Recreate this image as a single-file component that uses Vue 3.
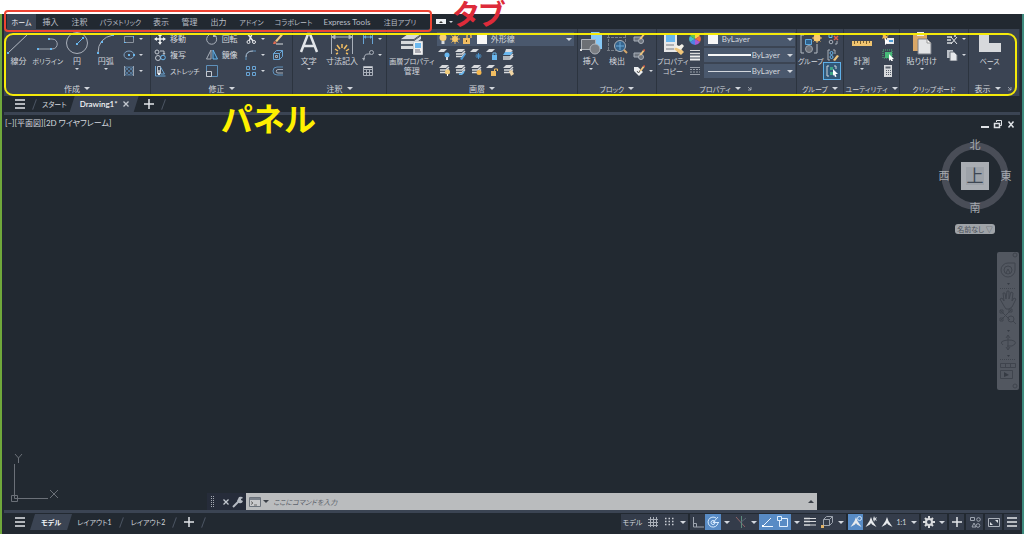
<script setup>
import { ref } from 'vue'

const tabs = [
  ['ホーム', 29], ['挿入', 29], ['注釈', 29], ['パラメトリック', 53], ['表示', 28], ['管理', 29],
  ['出力', 29], ['アドイン', 37], ['コラボレート', 47], ['Express Tools', 60], ['注目アプリ', 46]
]

const sheets = (c = '#d8dadd') =>
  `<path d="M4 1h7L8 4H1z" fill="${c}"/><path d="M2 6h6l3-3M2 8.500h6l3-3" stroke="${c}" stroke-width="1.500" fill="none"/>`
const block = '<path d="M1 4h7v4H1z" fill="#6d747e" stroke="#a9b0ba"/><circle cx="8" cy="8" r="2.500" fill="#6d747e" stroke="#a9b0ba"/>'
const pencil = '<path d="M7 5l3-4 1.500 1-3 4-2 .5z" fill="#efc57d"/><path d="M10 1l1-1 1.500 1-1 1.500z" fill="#d95a45"/>'
const person = '<path d="M6 1l1.500 4 4 6L7 8.500 6 7 5 8.500.500 11l4-6z" fill="#e8eaed"/>'

const icons = {
  line: '<path d="M2 21L22 2" stroke="#b4bac3"/><path d="M1 20h2v2H1zM21 1h2v2h-2z" fill="#69b7ee"/>',
  poly: '<path d="M2 17h14c7 0 7-10 0-10h-3" fill="none" stroke="#9fa6b1"/><path d="M1 16h2v2H1zM14 16h2v2h-2zM12 6h2v2h-2z" fill="#69b7ee"/>',
  circle: '<circle cx="12" cy="11" r="10.500" fill="none" stroke="#aab0ba"/><path d="M12 12l6-6" stroke="#69b7ee"/><path d="M11 11h2v2h-2zM17 5h2v2h-2z" fill="#69b7ee"/>',
  arc: '<path d="M4 21Q4 6 19 3" fill="none" stroke="#aab0ba"/><path d="M3 20h2v2H3zM7 9h2v2H7zM18 2h2v2h-2z" fill="#69b7ee"/>',
  rect: '<path d="M1.500 3.500h9v6h-9z" fill="none" stroke="#8b929d"/><path d="M1 9h2v1H1zM10 3h1v2h-1z" fill="#69b7ee"/>',
  ellipse: '<ellipse cx="6" cy="6" rx="5" ry="4" fill="none" stroke="#7fa3c4"/><path d="M5 5h2v2H5zM10 5h2v2h-2z" fill="#69b7ee"/>',
  hatch: '<path d="M2 2h8v8H2zM2 6l4-4M2 10l8-8M6 10l4-4M2 6l4 4M2 2l8 8M6 2l4 4" fill="none" stroke="#5f8cb4" stroke-width=".7"/><path d="M1 1h1v10H1zM10 1h1v10h-1z" fill="#9aa2ad"/>',
  move: '<path d="M6 1v10M1 6h10" stroke="#f0f2f4" stroke-width="1.500"/><path d="M6 0l2 3H4zM6 12l2-3H4zM0 6l3-2v4zM12 6L9 4v4z" fill="#f0f2f4"/>',
  copy: '<circle cx="3" cy="3" r="2" fill="none" stroke="#bfc5cd"/><circle cx="4" cy="9" r="2.500" fill="none" stroke="#bfc5cd"/><circle cx="9" cy="8.500" r="2.300" fill="none" stroke="#69b7ee"/><path d="M6 2h4v3M9 4l1 1.500L11 4" fill="none" stroke="#bfc5cd"/>',
  stretch: '<path d="M1.500 1v10h10" fill="none" stroke="#69a5d5"/><path d="M3.500 1.500h3v7h-3z" fill="none" stroke="#bfc5cd"/><path d="M6.500 2l4 7h-4" fill="none" stroke="#69a5d5"/><path d="M5 5v5M4 8l1 2 1-2" stroke="#fff" fill="none"/>',
  rotate: '<path d="M9 2.500A5 5 0 1 1 3 2" fill="none" stroke="#a9b0ba"/><path d="M7 0v4h4z" fill="#a9b0ba"/>',
  mirror: '<path d="M5 1v9H.500z" fill="none" stroke="#aab0ba"/><path d="M7 1v9h4.500z" fill="#2c4f6d" stroke="#69b7ee"/>',
  scale: '<path d="M.500.500h11v11H.500z" fill="none" stroke="#5e90ba"/><path d="M.500 6.500h5v5h-5z" fill="none" stroke="#c4c9d0"/>',
  trim: '<path d="M2 0l6 8M7 1L4 8" stroke="#e6e8eb" stroke-width="1.500"/><circle cx="3.500" cy="9" r="1.500" fill="none" stroke="#e6e8eb"/><circle cx="9" cy="9" r="1.500" fill="none" stroke="#e6e8eb"/>',
  fillet: '<path d="M1 11V8Q1 2 8 2h3" fill="none" stroke="#5e90ba"/><path d="M1 8Q1 2 8 2" fill="none" stroke="#a9b0ba"/>',
  array: '<path d="M1.500 1.500h3v3h-3zM7.500 1.500h3v3h-3zM1.500 7.500h3v3h-3zM7.500 7.500h3v3h-3z" fill="none" stroke="#69a5d5"/>',
  erase: '<path d="M3 8l6-7 2 1-6 7z" fill="#f1c987"/><path d="M2 8l3 2-2 1H1z" fill="#e36a50"/><path d="M4 11h7" stroke="#dadde1"/>',
  cube: '<path d="M1.500 4.500h6v6h-6zM1.500 4.500l3-3h6v6l-3 3M7.500 4.500l3-3" fill="none" stroke="#69a5d5"/><path d="M3.500 6.500h2v2h-2z" fill="none" stroke="#a9b0ba"/>',
  offset: '<path d="M11 2H5a4 4 0 0 0 0 8h6" fill="none" stroke="#5e90ba"/><path d="M11 4.500H6a1.500 1.500 0 0 0 0 3.500h5" fill="none" stroke="#a9b0ba"/>',
  text: '<path d="M4 20L11 2h2l7 18M7 14h10" fill="none" stroke="#e2e5e9" stroke-width="2.500"/>',
  dim: '<path d="M1.500 1v21M22.500 1v21M2 5h20M2 5l3-2v4zM22 5l-3-2v4z" fill="#c4c9d0" stroke="#a9b0ba"/><path d="M12 12v4M7 13l3 4M17 13l-3 4M5 17l3 2M19 17l-3 2M6 22l2-1M18 22l-2-1" stroke="#f1bd62" stroke-width="1.500"/>',
  dimSmall: '<path d="M1.500 1v10M10.500 1v10M2 4h8" stroke="#69a5d5"/><path d="M2 4l2-2v4zM10 4L8 2v4z" fill="#69a5d5"/>',
  leader: '<path d="M2 10q0-5 4-5h2" fill="none" stroke="#aab0ba"/><circle cx="9.500" cy="3.500" r="2" fill="none" stroke="#aab0ba"/><path d="M0 9l2 3 1-3z" fill="#aab0ba"/>',
  table: '<path d="M1.500 1.500h9v9h-9zM1 4.500h10M1 7.500h10M4.500 4v7M7.500 4v7" fill="none" stroke="#aab0ba"/><path d="M2 2h8v1H2z" fill="#d5d8dc"/>',
  layers: '<path d="M8 2h13l-7 5H1zM1 9h13l7-5v3l-7 5H1zM1 14h13l7-5v3l-7 5H1z" fill="#d8dadd"/><path d="M1 8h13l7-5M1 13h13l7-5" stroke="#6d747f" fill="none"/><path d="M13.500 9.500h9v13h-9z" fill="#f0f0f0" stroke="#cfd2d6"/><path d="M15 11h6v5h-6z" fill="#6bb8f0"/><path d="M15 18h5M15 20h6" stroke="#667"/>',
  bulb: '<circle cx="6" cy="4.500" r="3.500" fill="#f5cf7b"/><path d="M4.500 8h3v3h-3z" fill="#d8dadd"/>',
  sun: '<path d="M6 1v10M1 6h10M2.500 2.500l7 7M9.500 2.500l-7 7" stroke="#e4b35a"/><circle cx="6" cy="6" r="3" fill="#f6c868"/>',
  lock: '<path d="M6 6V3a2 2 0 0 1 4 0v2" fill="none" stroke="#e8b55f" stroke-width="1.500"/><path d="M2 5h7v6H2z" fill="#f1bd62"/><path d="M5 7h1v2H5z" fill="#714e1c"/>',
  lyBulbBlue: '<path d="M3 1h6L6 4H0z" fill="#d8dadd"/><circle cx="9" cy="7" r="2.500" fill="#69b7ee"/><path d="M8 9h2v3H8z" fill="#d8dadd"/>',
  lyMatch: sheets() + '<path d="M6 11l5-6 1 1-4 6z" fill="#4f9cd8"/>',
  lyFreeze: '<path d="M3 1h6L6 4H0z" fill="#d8dadd"/><path d="M8.500 5v6M5.500 8h6M6.500 6l4 4M10.500 6l-4 4" stroke="#4a93cc"/>',
  lyLock: '<path d="M3 1h6L6 4H0z" fill="#d8dadd"/><path d="M6 7h5v5H6z" fill="#69b7ee"/><path d="M7 7V5h3v2" fill="none" stroke="#69b7ee"/>',
  lyWalk: '<path d="M4 1h5l2 2-2 1H3z" fill="#d8dadd"/><path d="M3 4h8L9 7H1z" fill="#69b7ee"/><path d="M1 9h7l3-3M1 11h7l3-3" fill="none" stroke="#d8dadd" stroke-width="1.500"/>',
  lyBulb: sheets() + '<circle cx="9.500" cy="8" r="2.500" fill="#f5cf7b"/><path d="M9 10h1v2H9z" fill="#fff"/>',
  lyUndo: sheets() + '<path d="M5 10q4 1 5-3" fill="none" stroke="#69b7ee" stroke-width="1.500"/>',
  lySun: sheets() + '<circle cx="9" cy="8.500" r="2.500" fill="#f6b84d"/>',
  lyUnlock: '<path d="M3 1h6L6 4H0z" fill="#d8dadd"/><path d="M5 7h5v5H5z" fill="#f1bd62"/><path d="M8.500 7V5h3v2" fill="none" stroke="#f1bd62"/>',
  lyTag: sheets() + '<path d="M7 7l3-1 2 4-3 2z" fill="#f2d6a4"/>',
  insert: '<path d="M12 0h8l3 3v14h-11z" fill="#86c8f6"/><path d="M2.500 7.500h14v10h-14z" fill="#6d7075" stroke="#b0b4ba"/><circle cx="16" cy="17" r="5" fill="#7a7d82" stroke="#b0b4ba"/><path d="M1 17h2v2H1z" fill="#ddd"/>',
  detect: '<path d="M3.500 3v16M20.500 3v8M2 18.500h11M2 5.500h20" stroke="#777e88" stroke-dasharray="3 1"/><circle cx="15" cy="14" r="5.500" fill="#35658e" stroke="#b0b4ba"/><path d="M11 14h8M15 10v8" stroke="#6da9d6"/><path d="M19 18l3 3" stroke="#d6a869" stroke-width="2"/>',
  blkEdit: block + pencil,
  blkNew: block + pencil,
  tag: '<path d="M1 2h4l5 5-4 4-5-5z" fill="#eceef0"/><path d="M4 6l1.500 2L8 4" stroke="#555" fill="none"/>' + pencil,
  match: '<path d="M3 1h13v19H3z" fill="#e8e8e8"/><path d="M5 3h9v7H5z" fill="#69b7ee"/><path d="M5 13h8M5 17h8" stroke="#767b82"/><path d="M13 17l4-3 6 6-3 3z" fill="#f0c67a"/><path d="M14 15l2-2 2 1 3-2 2 2-3 4z" fill="#f4f1e8"/>',
  wheel: '<path d="M6 6V0A6 6 0 0 1 11 3z" fill="#ffd043"/><path d="M6 6l5-3a6 6 0 0 1 0 6z" fill="#f1703f"/><path d="M6 6l5 3a6 6 0 0 1-5 3z" fill="#ab5ad0"/><path d="M6 6v6a6 6 0 0 1-5-3z" fill="#4f82e4"/><path d="M6 6L1 9a6 6 0 0 1 0-6z" fill="#45bfd0"/><path d="M6 6L1 3a6 6 0 0 1 5-3z" fill="#62c44f"/>',
  weights: '<path d="M1 1.500h10" stroke="#ddd"/><path d="M1 4.500h10" stroke="#ddd" stroke-width="1.500"/><path d="M1 7.500h10M1 10.500h10" stroke="#eee" stroke-width="2"/>',
  types: '<path d="M1 2.500h10M1 9.500h10" stroke="#989fa9"/><path d="M1 4.500h10M1 7h10" stroke="#989fa9" stroke-dasharray="2 1"/>',
  group: '<path d="M5 3H2v18h3M15 21h3V12" fill="none" stroke="#b4bac3"/><path d="M6.500 7.500h6v5h-6z" fill="#2f618b" stroke="#5eaae0"/><circle cx="10" cy="17" r="3.500" fill="#6d7178" stroke="#9ba1aa"/><path d="M18 1v10M13 6h10M14.500 2.500l7 7M21.500 2.500l-7 7" stroke="#e8b55f"/><circle cx="18" cy="6" r="3.500" fill="#f8cb72"/>',
  ungroup: '<path d="M2 1.500h3v3H2z" fill="none" stroke="#69b7ee"/><circle cx="4" cy="9" r="1.800" fill="none" stroke="#aab0ba"/><path d="M7 3l4 4M11 3L7 7" stroke="#e25d4b" stroke-width="1.500"/><path d="M8 11h2V8" stroke="#aab0ba" fill="none"/>',
  groupEdit: '<path d="M3 1H1v10h2M6 1h2v4" fill="none" stroke="#aab0ba"/><circle cx="4.500" cy="4" r="1.500" fill="none" stroke="#69b7ee"/><circle cx="4.500" cy="8" r="1.500" fill="none" stroke="#69b7ee"/><path d="M6 11l4-5 2 1-4 5z" fill="#efc57d"/>',
  groupSel: '<path d="M3 1H1v10h2M8 1h2v3" fill="none" stroke="#cfd4da"/><path d="M4 2h3v3H4zM4 7h3v3H4z" fill="#3ea487"/><path d="M7 4l5 5H9.500l1 2.500-1.500.5-1-2.500L7 11z" fill="#fff"/>',
  ruler: '<path d="M2 9h20v5H2z" fill="#f0c46f"/><path d="M4.500 9v3M7.500 9v2M10.500 9v3M13.500 9v2M16.500 9v3M19.500 9v2" stroke="#7b6130"/>',
  quick: '<path d="M3 0l1 3 3-1-2 2 2 2-3-1-1 3-1-3-2 1 1-3-1-2 2 1z" fill="#f3bd5a"/><path d="M5 5h7v6H5z" fill="#e7e9eb"/><path d="M7 7h4v2H7z" fill="#4d9ad3"/><path d="M3 5l5 5-3 .5L3 12z" fill="#fff"/>',
  select: '<path d="M1 1h9v8H1z" fill="none" stroke="#51ba7b" stroke-dasharray="1 1"/><path d="M3 3h7v6H3z" fill="#47ba79"/><path d="M7 5l5 5-2 .2 1 1.800-1.500.5-1-2L7 12z" fill="#fff"/>',
  calc: '<path d="M2 0h8v12H2z" fill="#d8dadd"/><path d="M3.500 1.500h5v2h-5z" fill="#59616c"/><path d="M4.500 5v6M6.500 5v6M8.500 5v6" stroke="#59616c" stroke-dasharray="1 1"/>',
  paste: '<path d="M3 2h14v17H3z" fill="#d9a767"/><path d="M7 0h7v4H7z" fill="#ececec"/><path d="M8 7h9l4 4v11H8z" fill="#e3e4e6" stroke="#7a7f87"/><path d="M17 7v4h4z" fill="#fff" stroke="#999"/>',
  cut: '<path d="M1 1h8v3M1 4h5M1 7h4M1 10h5" stroke="#d8dadd" stroke-width="1.500" fill="none"/><path d="M5 4l6 7M11 4l-6 7" stroke="#e6e8eb"/>',
  pages: '<path d="M1 1h6v8H1z" fill="#bcc1c8"/><path d="M4 3h4l3 3v6H4z" fill="#e6e8eb" stroke="#6c737d"/>',
  base: '<path d="M1 2h10v9h12v9H1z" fill="#d7d9dc"/>',
  grid: '<path d="M3.500 1v10M6.500 1v10M9.500 1v10M1 3.500h10M1 6.500h10M1 9.500h10" stroke="#aab0b9"/>',
  dots: '<path d="M2 2.500h10M2 5.500h10M2 8.500h10" stroke="#c8ccd3" stroke-width="1.500" stroke-dasharray="1.500 2"/>',
  ortho: '<path d="M1.500 1v10H12M1.500 7.500h3V11" fill="none" stroke="#9da4af"/>',
  polar: '<path d="M9 2A5 5 0 1 0 11 7M6 6.500h6M6 6.500L11 1" fill="none" stroke="#d7ebff"/><circle cx="6" cy="6.500" r="2" fill="none" stroke="#d7ebff"/>',
  iso: '<path d="M1 1l9 10" stroke="#8f6468"/><path d="M6.500 0v12" stroke="#5d8b7c"/><path d="M5 7l6-5" stroke="#5b6474"/>',
  track: '<path d="M1 10.500h11M2 10L10 2" stroke="#eff7ff"/><path d="M1 9h2v2H1z" fill="#fff"/>',
  osnap: '<path d="M2.500 2.500h8v8h-8z" fill="none" stroke="#e2f0ff"/><path d="M.500.500h4v4h-4z" fill="#4f8cc9" stroke="#e2f0ff"/>',
  lines: '<path d="M0 2.500h6M0 5.500h6M0 9h6" stroke="#d8dadd" stroke-width="1.500"/><path d="M6 2.500h6M6 5.500h6M6 9h6" stroke="#d8dadd"/>',
  isoCube: '<path d="M2.500 3.500h6v6h-6zM2.500 3.500l3-3h6v6l-3 3M8.500 3.500l3-3" fill="none" stroke="#9da4af"/><path d="M0 9h3v3H0z" fill="#e1b267"/>',
  annoOn: person + '<circle cx="9.500" cy="2.500" r="2" fill="none" stroke="#cfe4fa"/>',
  annoAuto: person + '<path d="M9 0l1 2 2-1-1 2 1 2-2-1-1 2-1-3z" fill="#cfd3d9"/>',
  anno: person,
  gear: '<path d="M6 0v12M0 6h12M2 2l8 8M10 2l-8 8" stroke="#d8dadd" stroke-width="2"/><circle cx="6" cy="6" r="3" fill="#3b4453" stroke="#d8dadd" stroke-width="2"/>',
  plus: '<path d="M6 1v10M1 6h10" stroke="#e2e5e9" stroke-width="1.500"/>',
  isolate: '<path d="M1.500 1.500h4v3h-4z" fill="none" stroke="#9da4af"/><circle cx="9.500" cy="3.500" r="1.800" fill="none" stroke="#9da4af"/><path d="M3 11l2-4 2 4z" fill="none" stroke="#9da4af"/><circle cx="9" cy="9.500" r="1.800" fill="none" stroke="#9da4af"/>',
  full: '<path d="M.500 2.500h11v8H.500z" fill="none" stroke="#aab0b9"/><path d="M7 4h3v3zM2 9h3L2 6z" fill="#dde0e4"/>',
  menu: '<path d="M1 2h10M1 6h10M1 10h10" stroke="#e2e5e9" stroke-width="1.500"/>',
  close: '<path d="M3.500 3.500l5 5M8.500 3.500l-5 5" stroke="#c3c8d0" stroke-width="1.300"/>',
  wrench: '<path d="M1 11l6-6" stroke="#b6bbc3" stroke-width="2"/><path d="M7 1q3-1 4 1L9 3v1l2 1q-1 3-4 2L5 5z" fill="#b6bbc3"/>',
  grip: '<path d="M4.500 0v12M6.500 0v12" stroke="#a3a8b1" stroke-dasharray="1 1"/>',
  prompt: '<path d="M.500 1.500h11v9H.500z" fill="#c8c9cb" stroke="#6c737c"/><path d="M1 2h10v2H1z" fill="#7b828b"/><path d="M2 5.500l2 1.500-2 1.500M5 9h3" fill="none" stroke="#666"/>',
  min: '<path d="M2 9h8" stroke="#dfe2e6" stroke-width="2"/>',
  restore: '<path d="M4.500 4V2.500h5v5H8" fill="none" stroke="#dfe2e6"/><path d="M2.500 5.500h5v4h-5z" fill="none" stroke="#dfe2e6" stroke-width="1.500"/>',
  closeBold: '<path d="M3.500 3.500l5 6M8.500 3.500l-5 6" stroke="#dfe2e6" stroke-width="1.500"/>',
  corner: '<path d="M4 4l4 4M8 4v4H4" fill="none" stroke="#b6bbc3"/>'
}

const big = (w, icon, lines, arrow = false) => ({ w, big: true, icon, lines, arrow })
const small = (w, ...items) => ({ w, items: items.map(([icon, label, arrow, on]) => ({ icon, label, arrow, on })) })

const panels = [
  { name: '作成', w: 147, arrow: true, cols: [big(29, 'line', ['線分']), big(30, 'poly', ['ポリライン']), big(29, 'circle', ['円'], true), big(29, 'arc', ['円弧'], true),
    small(30, ['rect', '', true], ['ellipse', '', true], ['hatch', '', true])] },
  { name: '修正', w: 142, arrow: true, cols: [small(52, ['move', '移動'], ['copy', '複写'], ['stretch', 'ストレッチ']), small(40, ['rotate', '回転'], ['mirror', '鏡像'], ['scale', '']),
    small(27, ['trim', '', true], ['fillet', '', true], ['array', '', true]), small(23, ['erase'], ['cube'], ['offset'])] },
  { name: '注釈', w: 94, arrow: true, cols: [big(32, 'text', ['文字'], true), big(35, 'dim', ['寸法記入']), small(27, ['dimSmall', '', true], ['leader', '', true], ['table'])] },
  { name: '画層', w: 191, arrow: true, cols: [big(50, 'layers', ['画層プロパティ', '管理']), { w: 141, layer: true }] },
  { name: 'ブロック', w: 79, arrow: true, cols: [big(26, 'insert', ['挿入'], true), big(27, 'detect', ['検出']), small(26, ['blkEdit'], ['blkNew'], ['tag', '', true])] },
  { name: 'プロパティ', w: 140, arrow: true, corner: true, cols: [big(32, 'match', ['プロパティ', 'コピー']), { w: 108, props: true }] },
  { name: 'グループ', w: 47, arrow: true, cols: [big(28, 'group', ['グループ']), small(19, ['ungroup'], ['groupEdit'], ['groupSel', '', false, true])] },
  { name: 'ユーティリティ', w: 56, arrow: true, cols: [big(36, 'ruler', ['計測'], true), small(20, ['quick'], ['select'], ['calc'])] },
  { name: 'クリップボード', w: 69, cols: [big(44, 'paste', ['貼り付け'], true), small(25, ['cut', '', true], ['pages', '', true])] },
  { name: '表示', w: 51, arrow: true, corner: true, cols: [big(42, 'base', ['ベース'], true), small(9)] }
]
const fr = list => ({ gridTemplateColumns: list.map(i => `minmax(0, ${i.w}fr)`).join(' ') })
const isKana = text => /[ァ-ヶー]{3}/.test(text)

const layerRows = [
  ['lyBulbBlue', 'lyMatch', 'lyFreeze', 'lyLock', 'lyWalk'],
  ['lyBulb', 'lyUndo', 'lySun', 'lyUnlock', 'lyTag']
]
const props = [
  { icon: 'wheel', label: '色', swatch: true },
  { icon: 'weights', label: '線の太さ', thick: true },
  { icon: 'types', label: '線種' }
]

const status = [
  [{ text: 'モデル', w: 23 }, { icon: 'grid', w: 17 }, { icon: 'dots', w: 16 }, { w: 11 }],
  [{ icon: 'ortho', w: 15 }, { icon: 'polar', w: 16, on: true }, { w: 12 }, { icon: 'iso', w: 15 }, { w: 11 }, { icon: 'track', w: 15, on: true },
    { icon: 'osnap', w: 17, on: true }, { w: 11 }, { icon: 'lines', w: 16 }, { icon: 'isoCube', w: 17 }, { w: 11 }],
  [{ icon: 'annoOn', w: 15, on: true }, { icon: 'annoAuto', w: 16 }, { icon: 'anno', w: 16 }, { text: '1:1', w: 13 }, { w: 11 }],
  [{ icon: 'gear', w: 15 }, { w: 11 }],
  [{ icon: 'plus', w: 15 }],
  [{ icon: 'isolate', w: 17 }],
  [{ icon: 'full', w: 17 }],
  [{ icon: 'menu', w: 16 }]
]
const command = ref('')
</script>

<template>
  <div class="page">
    <div class="window">
      <nav class="tabs">
        <button v-for="(t, i) in tabs" :key="t[0]" class="tab" :class="{ active: i === 0, kana: isKana(t[0]) }" :style="{ width: t[1] + 'px' }">{{ t[0] }}</button>
        <button class="toggle" aria-label="リボンの表示切替"><i class="chip"><i class="up"></i></i><i class="down"></i></button>
      </nav>

      <div class="ribbon" :style="fr(panels)">
        <section v-for="p in panels" :key="p.name" class="panel">
          <div class="body" :style="fr(p.cols)">
            <template v-for="(c, ci) in p.cols" :key="ci">
              <button v-if="c.big" class="big">
                <svg class="icon-big" viewBox="0 0 24 24" v-html="icons[c.icon]"></svg>
                <span v-for="l in c.lines" :key="l" :class="{ kana: isKana(l) }">{{ l }}</span>
                <i v-if="c.arrow" class="down"></i>
              </button>
              <div v-else-if="c.layer" class="layer">
                <div class="combo">
                  <svg v-for="n in ['bulb', 'sun', 'lock']" :key="n" class="icon" viewBox="0 0 12 12" v-html="icons[n]"></svg>
                  <i class="swatch"></i>
                  <select aria-label="画層"><option>外形線</option></select>
                  <i class="down wide"></i>
                </div>
                <div v-for="(r, ri) in layerRows" :key="ri" class="layer-row">
                  <button v-for="n in r" :key="n" :aria-label="n"><svg class="icon" viewBox="0 0 12 12" v-html="icons[n]"></svg></button>
                </div>
              </div>
              <div v-else-if="c.props" class="props">
                <label v-for="r in props" :key="r.icon" class="prop">
                  <svg class="icon" viewBox="0 0 12 12" v-html="icons[r.icon]"></svg>
                  <span class="combo">
                    <i v-if="r.swatch" class="swatch"></i>
                    <i v-else class="rule" :class="{ thick: r.thick }"></i>
                    <select :aria-label="r.label"><option>ByLayer</option></select>
                    <i class="down wide"></i>
                  </span>
                </label>
              </div>
              <div v-else class="stack">
                <button v-for="it in c.items" :key="it.icon" class="small" :class="{ on: it.on }" :aria-label="it.label || it.icon">
                  <svg class="icon" viewBox="0 0 12 12" v-html="icons[it.icon]"></svg>
                  <span v-if="it.label" :class="{ kana: isKana(it.label) }">{{ it.label }}</span>
                  <i v-if="it.arrow" class="down"></i>
                </button>
              </div>
            </template>
          </div>
          <footer class="title">
            <span :class="{ kana: isKana(p.name) }">{{ p.name }}</span><i v-if="p.arrow" class="down wide"></i>
            <svg v-if="p.corner" class="corner" viewBox="0 0 12 12" v-html="icons.corner"></svg>
          </footer>
        </section>
      </div>

      <div class="files">
        <button class="square" aria-label="メニュー"><svg class="icon" viewBox="0 0 12 12" v-html="icons.menu"></svg></button>
        <i class="slash"></i>
        <button class="file start kana">スタート</button>
        <button class="file current drawing">Drawing1*<svg class="icon" viewBox="0 0 12 12" v-html="icons.close"></svg></button>
        <button class="square" aria-label="新規"><svg class="icon" viewBox="0 0 12 12" v-html="icons.plus"></svg></button>
        <i class="slash"></i>
      </div>

      <main class="canvas">
        <div class="view-head">
          <span>[−][平面図][2D ワイヤフレーム]</span>
          <span class="win">
            <button v-for="n in ['min', 'restore', 'closeBold']" :key="n" :aria-label="n"><svg class="icon" viewBox="0 0 12 12" v-html="icons[n]"></svg></button>
          </span>
        </div>

        <div class="cube">
          <svg class="compass" viewBox="0 0 76 78">
            <circle cx="38" cy="39" r="30" fill="none" stroke="#494d57" stroke-width="7" />
            <path d="M24 25h28v28H24z" fill="#a9adb3" />
            <path d="M29 30h18v18H29z" fill="#9da2a9" />
            <g class="dir"><text x="38" y="12">北</text><text x="7" y="43">西</text><text x="69" y="43">東</text><text x="38" y="75">南</text></g>
            <text class="face" x="38" y="45">上</text>
          </svg>
          <button class="ucs kana">名前なし ▽</button>
        </div>

        <svg class="navbar" viewBox="0 0 22 138">
          <rect width="22" height="138" rx="2" fill="#525760" />
          <g fill="none" stroke="#3f444d">
            <circle cx="18" cy="3" r="2" /><circle cx="18" cy="134" r="2" />
            <path d="M11 11a7 7 0 1 0 7 7v-7z" /><circle cx="11" cy="18" r="4" /><path d="M9 21l2-4 2 4" />
            <path d="M3 36.500h16M3 107.500h16" stroke-dasharray="1 1" />
            <path d="M7 54l-4-7 2-1 2 3-1-8 2 0 1 6 1-8 2 0 0 8 2-7 2 1-1 8 2-3 2 1-4 8-3 2H9z" />
            <path d="M3 58l10 10M14 58L4 68M3 58h3v3H3zM12 57h3v3h-3zM3 66h3v3H3z" /><circle cx="14" cy="67" r="3" /><path d="M16 69l3 3" />
            <path d="M11 83v15M9 86l2-3 2 3M9 95l2 3 2-3M6 93q-5-4 5-5 9 0 7 4-2 3-8 2" />
            <path d="M3.500 111.500h15v4h-15zM8.500 111v5M13.500 111v5M3.500 118.500h12v8h-12z" />
          </g>
          <path d="M10 31h3l-1.500 2zM10 78h3l-1.500 2zM10 103h3l-1.500 2zM7 120l5 3-5 2z" fill="#363b44" />
        </svg>

        <svg class="axes" viewBox="0 0 50 50" fill="none" stroke="#6b7078">
          <path d="M3.500 10v34.500H37M.500 41.500h6v6h-6zM4 0l3.500 4L11 0M7.500 4v5M39 36l8 8M47 36l-8 8" />
        </svg>

        <div class="command">
          <span class="tools">
            <svg class="icon" viewBox="0 0 12 12" v-html="icons.grip"></svg>
            <button aria-label="閉じる"><svg class="icon" viewBox="0 0 12 12" v-html="icons.close"></svg></button>
            <button aria-label="カスタマイズ"><svg class="icon" viewBox="0 0 12 12" v-html="icons.wrench"></svg></button>
          </span>
          <span class="entry">
            <svg class="icon" viewBox="0 0 12 12" v-html="icons.prompt"></svg><i class="down dark"></i>
            <input v-model="command" class="kana" aria-label="コマンド" placeholder="ここにコマンドを入力" />
            <i class="up dark"></i>
          </span>
        </div>
      </main>

      <div class="bottom">
        <button class="square" aria-label="レイアウト一覧"><svg class="icon" viewBox="0 0 12 12" v-html="icons.menu"></svg></button>
        <button class="file current model kana">モデル</button>
        <button class="file kana">レイアウト1</button><i class="slash"></i>
        <button class="file kana">レイアウト2</button><i class="slash"></i>
        <button class="square" aria-label="新規レイアウト"><svg class="icon" viewBox="0 0 12 12" v-html="icons.plus"></svg></button><i class="slash"></i>
        <div class="status">
          <div v-for="(g, gi) in status" :key="gi" class="group">
            <button v-for="(s, si) in g" :key="si" :class="{ on: s.on, kana: s.text }" :style="{ width: s.w + 'px' }" :aria-label="s.text || s.icon || 'メニュー'">
              <svg v-if="s.icon" class="icon" viewBox="0 0 12 12" v-html="icons[s.icon]"></svg>
              <template v-else-if="s.text">{{ s.text }}</template>
              <i v-else class="down wide"></i>
            </button>
          </div>
        </div>
      </div>
    </div>

    <div class="mark mark-tabs"></div>
    <div class="mark mark-panels"></div>
    <strong class="note note-tabs">タブ</strong>
    <strong class="note note-panels">パネル</strong>
  </div>
</template>

<style>
body { margin: 0; background: #fff; }
</style>

<style scoped>
* { box-sizing: border-box; }
.page {
  position: relative;
  display: flex;
  flex-direction: column;
  min-height: 100vh;
  padding-top: 14px;
  font: 8px/10px Lato, "Noto Sans CJK JP", sans-serif;
  font-feature-settings: "palt";
  color: #d3d7dd;
}
.window {
  flex: 1;
  display: flex;
  flex-direction: column;
  background: #222931;
  border-left: 2px solid #70a83b;
  border-right: 2px solid #3d8a7d;
  padding: 0 2px 3px;
}
button, select, input { font: inherit; font-feature-settings: inherit; color: inherit; background: none; border: 0; padding: 0; margin: 0; border-radius: 0; }
button { white-space: nowrap; display: flex; align-items: center; justify-content: center; }
.kana { font-size: 7px; }
.icon { width: 12px; height: 12px; flex: none; }
.down, .up { flex: none; width: 0; height: 0; border: 2px solid transparent; border-top-color: #d3d7dd; border-bottom: 0; }
.down.wide { border-width: 3px; border-bottom: 0; }
.up { border-top: 0; border-bottom: 2px solid #333; }
.down.dark { border-width: 3px; border-bottom: 0; border-top-color: #3b4048; }
.up.dark { border-width: 3px; border-top: 0; border-bottom-color: #3b4048; }

.tabs { display: flex; height: 15px; padding-left: 3px; color: #b9bec6; }
.tab.active { background: #3b4453; color: #eef0f3; }
.toggle { gap: 3px; margin-left: 13px; }
.chip { display: flex; align-items: center; justify-content: center; width: 10px; height: 5px; background: #eef0f3; }

.ribbon { display: grid; height: 67px; background: #3b4453; }
.panel { display: flex; flex-direction: column; min-width: 0; border-right: 1px solid #2c343f; }
.body { display: grid; flex: 1; padding-top: 2px; }
.big { flex-direction: column; justify-content: flex-start; padding-top: 1px; }
.icon-big { width: 24px; height: 24px; flex: none; }
.big .down { margin-top: 2px; }
.stack, .layer, .props { display: flex; flex-direction: column; min-width: 0; }
.small { height: 16px; gap: 4px; justify-content: flex-start; padding-left: 3px; }
.small.on { width: 16px; padding: 0; justify-content: center; background: #31597a; outline: 1px solid #5fb0e8; }
.title { display: flex; align-items: center; justify-content: center; gap: 4px; height: 15px; white-space: nowrap; }
.corner { width: 9px; height: 9px; }

.combo { display: flex; align-items: center; flex: 1; min-width: 0; height: 14px; padding-right: 2px; background: #4a586d; }
.combo select { flex: 1; min-width: 0; appearance: none; outline: 0; padding-left: 4px; }
.swatch { width: 10px; height: 10px; margin-left: 4px; background: #f7f7f7; }
.layer { padding-right: 3px; }
.layer .combo { flex: none; margin-top: 1px; }
.layer-row { display: flex; gap: 4px; height: 16px; align-items: center; padding-left: 1px; }
.props { padding-right: 1px; }
.prop { display: flex; align-items: center; gap: 3px; height: 16px; }
.rule { width: 43px; height: 1px; margin-left: 4px; background: #d3d7dd; }
.rule.thick { height: 2px; background: #f7f7f7; }
.rule + select { padding-left: 1px; }

.files, .bottom { display: flex; align-items: center; }
.files { height: 19px; padding-left: 6px; border-bottom: 3px solid #3b4453; }
.square { width: 20px; height: 16px; }
.slash { width: 1px; height: 11px; margin: 0 4px; background: #4c5563; rotate: 20deg; }
.file { height: 16px; padding: 0 5px; }
.start { padding: 0 3px; }
.current { background: #3b4453; color: #f2f4f6; font-weight: 600; }
.drawing { gap: 2px; padding: 0 7px 0 10px; clip-path: polygon(5px 0, 100% 0, calc(100% - 5px) 100%, 0 100%); }
.model { padding: 0 11px; clip-path: polygon(5px 0, 100% 0, calc(100% - 5px) 100%, 0 100%); }

.canvas { position: relative; flex: 1; display: flex; flex-direction: column; justify-content: space-between; }
.view-head { display: flex; justify-content: space-between; padding: 3px 3px 0 1px; }
.win { display: flex; gap: 1px; }
.cube { position: absolute; top: 22px; right: 7px; width: 76px; display: flex; flex-direction: column; align-items: center; gap: 9px; }
.compass { width: 76px; height: 78px; }
.dir { fill: #a5a9af; font-size: 11px; text-anchor: middle; }
.face { fill: #3e4754; font-size: 17px; text-anchor: middle; }
.ucs { height: 10px; padding: 0 2px; border-radius: 3px; background: #9fa3a8; color: #4b5059; }
.navbar { position: absolute; top: 137px; right: 1px; width: 22px; height: 138px; }
.axes { position: absolute; bottom: 6px; left: 7px; width: 50px; height: 50px; }
.command { display: flex; width: 60%; height: 17px; margin-left: 20%; }
.tools { display: flex; align-items: center; justify-content: space-between; width: 39px; padding-right: 2px; background: #262c3a; }
.entry { display: flex; flex: 1; align-items: center; gap: 2px; padding: 0 3px; background: #babcbe; }
.entry input { flex: 1; min-width: 0; outline: 0; padding-left: 2px; color: #333; font-style: italic; }
.entry input::placeholder { color: #5c626b; opacity: 1; }

.bottom { height: 21px; padding-left: 6px; border-top: 3px solid #3b4453; }
.status { display: flex; gap: 2px; margin-left: auto; }
.group { display: flex; background: #343c4a; }
.group button { height: 16px; }
.group .on { background: #588bc5; }

.mark { position: absolute; pointer-events: none; }
.mark-tabs { top: 10px; left: 4px; width: 428px; height: 22px; border: 2px solid #ee4433; border-radius: 4px; }
.mark-panels { top: 33px; left: 4px; right: 7px; height: 63px; border: 2px solid #f5ea0a; border-radius: 9px; }
.note { position: absolute; font-family: "Noto Sans CJK JP", sans-serif; font-weight: 700; white-space: nowrap; }
.note-tabs { top: 0; left: 453px; font-size: 28px; line-height: 26px; color: #dd2b3a; }
.note-panels { top: 100px; left: 221px; font-size: 32px; line-height: 34px; color: #fff000; }
</style>
